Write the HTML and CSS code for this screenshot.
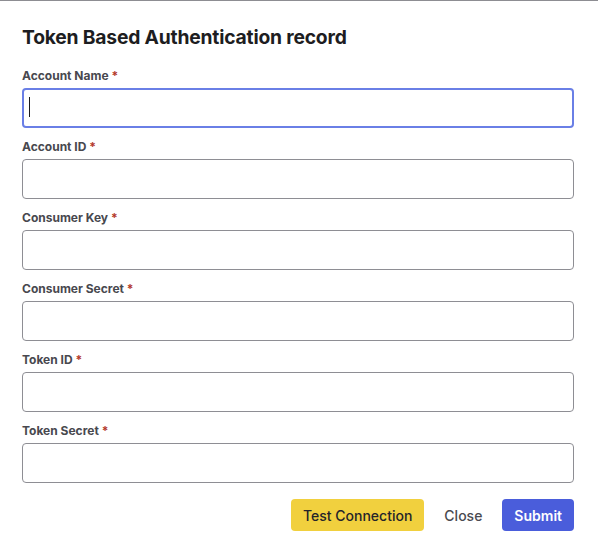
FILE: index.html
```html
<!DOCTYPE html>
<html lang="en">
<head>
<meta charset="utf-8">
<title>Token Based Authentication record</title>
<link rel="stylesheet" href="styles.css">
</head>
<body>
<div class="modal">
  <h1 class="title">Token Based Authentication record</h1>
  <form class="form">
    <div class="field">
      <label class="label">Account Name <span class="req">*</span></label>
      <div class="input-wrap">
        <input class="input input-focus" type="text">
        <span class="caret"></span>
      </div>
    </div>
    <div class="field">
      <label class="label">Account ID <span class="req">*</span></label>
      <input class="input" type="text">
    </div>
    <div class="field">
      <label class="label">Consumer Key <span class="req">*</span></label>
      <input class="input" type="text">
    </div>
    <div class="field">
      <label class="label">Consumer Secret <span class="req">*</span></label>
      <input class="input" type="text">
    </div>
    <div class="field">
      <label class="label">Token ID <span class="req">*</span></label>
      <input class="input" type="text">
    </div>
    <div class="field">
      <label class="label">Token Secret <span class="req">*</span></label>
      <input class="input" type="text">
    </div>
    <div class="actions">
      <button type="button" class="btn btn-test">Test Connection</button>
      <button type="button" class="btn btn-close">Close</button>
      <button type="button" class="btn btn-submit">Submit</button>
    </div>
  </form>
</div>
</body>
</html>
```
FILE: styles.css
```css
* { box-sizing: border-box; }
html, body { margin: 0; padding: 0; background: #ffffff; }
body { font-family: Inter, "Noto Sans", "Liberation Sans", sans-serif; }

.modal {
  width: 598px;
  height: 555px;
  border-top: 1px solid #8d8d92;
  padding: 24px 24px 0 22px;
  background: #fff;
}

.title {
  margin: 0;
  font-size: 19.3px;
  line-height: 24px;
  font-weight: 700;
  color: #1d1d21;
  letter-spacing: -0.2px;
}

.form {
  margin-top: 19px;
  display: flex;
  flex-direction: column;
  gap: 11px;
}

.field {
  display: flex;
  flex-direction: column;
  gap: 4px;
}

.label {
  font-size: 12px;
  line-height: 16px;
  font-weight: 700;
  color: #48484e;
}

.req { color: #b3372a; }

.input-wrap {
  position: relative;
  width: 552px;
}

.input {
  display: block;
  width: 552px;
  height: 40px;
  margin: 0;
  border: 1px solid #8e8e94;
  border-radius: 4px;
  padding: 0 6px;
  font-family: inherit;
  font-size: 14px;
  color: #222;
  background: #fff;
  outline: none;
}

.input-focus {
  border: 2px solid #6a7fe6;
}

.caret {
  position: absolute;
  left: 7px;
  top: 9px;
  width: 1px;
  height: 20px;
  background: #1a1a1a;
}

.actions {
  margin-top: 5px;
  display: flex;
  justify-content: flex-end;
  gap: 8px;
}

.btn {
  height: 32px;
  padding: 0 12px;
  border: none;
  border-radius: 4px;
  font-family: inherit;
  font-size: 14px;
  font-weight: 500;
  cursor: pointer;
}

.btn-test { background: #f1d03e; color: #24242a; }
.btn-close { background: transparent; color: #4a4a50; }
.btn-submit { background: #4a5ddb; color: #ffffff; font-weight: 600; }
```
